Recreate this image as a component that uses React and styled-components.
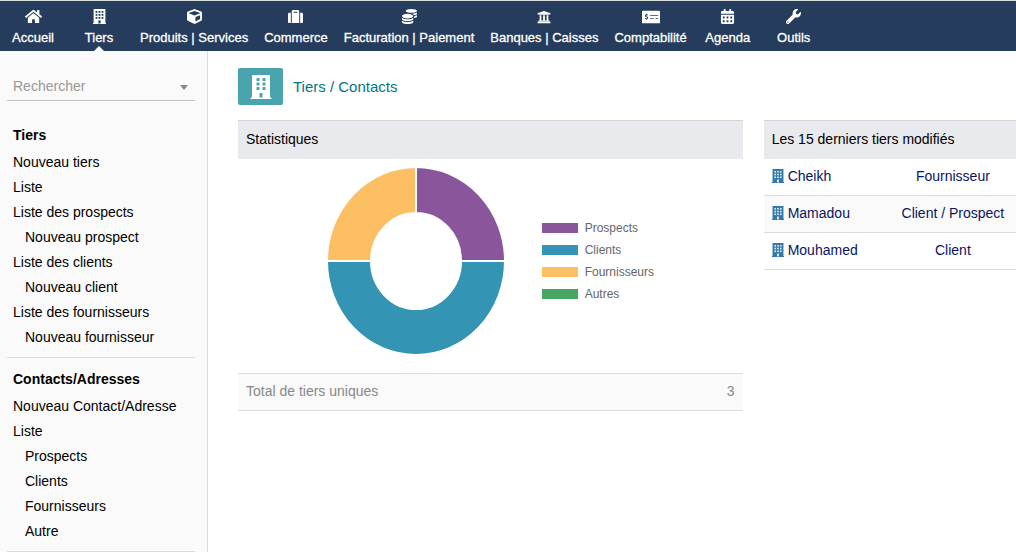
import React from 'react';
import styled, { createGlobalStyle, css } from 'styled-components';
import {
  FaHome,
  FaBuilding,
  FaCube,
  FaSuitcase,
  FaCoins,
  FaUniversity,
  FaMoneyCheckAlt,
  FaCalendarAlt,
  FaWrench,
} from 'react-icons/fa';

const GlobalStyle = createGlobalStyle`
  * {
    box-sizing: border-box;
  }
  body {
    margin: 0;
    background: #fff;
    color: #000;
    font-family: 'Liberation Sans', Arial, sans-serif;
    font-size: 14px;
    line-height: 16px;
  }
  a {
    color: inherit;
    text-decoration: none;
  }
`;

const WINDOW_ROWS = [2, 5, 8];
const WINDOW_COLS = [2.6, 5.6, 8.6];

function TowerIcon({ width = 12, height = 14, fill = 'currentColor', pane }) {
  return (
    <svg width={width} height={height} viewBox='0 0 13 15' aria-hidden='true'>
      <path fill={fill} d='M0.6 0H12.4V14H13V15H0V14H0.6Z' />
      {WINDOW_ROWS.map(y =>
        WINDOW_COLS.map(x => (
          <rect
            key={`${x}-${y}`}
            x={x}
            y={y}
            width='1.8'
            height='1.8'
            fill={pane}
          />
        )),
      )}
      <rect x='5.4' y='11.4' width='2.2' height='3' fill={pane} />
    </svg>
  );
}

const menu = [
  { label: 'Accueil', icon: <FaHome size={17} /> },
  {
    label: 'Tiers',
    icon: <TowerIcon width={13} height={15} pane='#263c5c' />,
    active: true,
  },
  { label: 'Produits | Services', icon: <FaCube size={15} /> },
  { label: 'Commerce', icon: <FaSuitcase size={15} /> },
  { label: 'Facturation | Paiement', icon: <FaCoins size={15} /> },
  { label: 'Banques | Caisses', icon: <FaUniversity size={14} /> },
  { label: 'Comptabilité', icon: <FaMoneyCheckAlt size={18} /> },
  { label: 'Agenda', icon: <FaCalendarAlt size={15} /> },
  { label: 'Outils', icon: <FaWrench size={15} /> },
];

const sections = [
  {
    title: 'Tiers',
    items: [
      { label: 'Nouveau tiers' },
      { label: 'Liste' },
      { label: 'Liste des prospects' },
      { label: 'Nouveau prospect', sub: true },
      { label: 'Liste des clients' },
      { label: 'Nouveau client', sub: true },
      { label: 'Liste des fournisseurs' },
      { label: 'Nouveau fournisseur', sub: true },
    ],
  },
  {
    title: 'Contacts/Adresses',
    items: [
      { label: 'Nouveau Contact/Adresse' },
      { label: 'Liste' },
      { label: 'Prospects', sub: true },
      { label: 'Clients', sub: true },
      { label: 'Fournisseurs', sub: true },
      { label: 'Autre', sub: true },
    ],
  },
];

const legend = [
  { label: 'Prospects', color: '#8a569b' },
  { label: 'Clients', color: '#3494b4' },
  { label: 'Fournisseurs', color: '#fdbf64' },
  { label: 'Autres', color: '#48a662' },
];

const lastModified = [
  { name: 'Cheikh', type: 'Fournisseur' },
  { name: 'Mamadou', type: 'Client / Prospect' },
  { name: 'Mouhamed', type: 'Client' },
];

function Donut() {
  return (
    <DonutSvg viewBox='0 0 178 188' role='img' aria-label='Statistiques'>
      <g stroke='#fff' strokeWidth='2'>
        <path
          fill='#8a569b'
          d='M89 0A89 94 0 0 1 178 94H134A45 48 0 0 0 89 46Z'
        />
        <path
          fill='#3494b4'
          d='M178 94A89 94 0 0 1 0 94H44A45 48 0 0 0 134 94Z'
        />
        <path
          fill='#fdbf64'
          d='M0 94A89 94 0 0 1 89 0V46A45 48 0 0 0 44 94Z'
        />
      </g>
    </DonutSvg>
  );
}

function App() {
  return (
    <>
      <GlobalStyle />
      <TopBar>
        {menu.map(({ label, icon, active }) => (
          <MenuItem key={label} href='#' $active={active}>
            <MenuIcon>{icon}</MenuIcon>
            {label}
          </MenuItem>
        ))}
      </TopBar>
      <Layout>
        <Sidebar>
          <Search aria-label='Rechercher' defaultValue=''>
            <option value=''>Rechercher</option>
          </Search>
          {sections.map(({ title, items }) => (
            <Section key={title}>
              <SectionTitle href='#'>{title}</SectionTitle>
              {items.map(({ label, sub }) => (
                <SideLink key={label} href='#' $sub={sub}>
                  {label}
                </SideLink>
              ))}
            </Section>
          ))}
        </Sidebar>
        <Main>
          <PageHeader>
            <PageIcon>
              <FaBuilding size={24} />
            </PageIcon>
            <PageTitle>Tiers / Contacts</PageTitle>
          </PageHeader>
          <Columns>
            <section>
              <PanelTitle>Statistiques</PanelTitle>
              <Chart>
                <Donut />
                <Legend>
                  {legend.map(({ label, color }) => (
                    <LegendItem key={label} $color={color}>
                      {label}
                    </LegendItem>
                  ))}
                </Legend>
              </Chart>
              <Total>
                <span>Total de tiers uniques</span>
                <span>3</span>
              </Total>
            </section>
            <Table>
              <thead>
                <tr>
                  <HeadCell colSpan={2}>Les 15 derniers tiers modifiés</HeadCell>
                </tr>
              </thead>
              <tbody>
                {lastModified.map(({ name, type }) => (
                  <Row key={name}>
                    <Cell>
                      <NameLink href='#'>
                        <TowerIcon fill='#3278a8' pane='#dcebf4' />
                        {name}
                      </NameLink>
                    </Cell>
                    <Cell $center>{type}</Cell>
                  </Row>
                ))}
              </tbody>
            </Table>
          </Columns>
        </Main>
      </Layout>
    </>
  );
}

const TopBar = styled.nav`
  display: flex;
  height: 51px;
  border-top: 1px solid #dadfdd;
  background: #263c5c;
`;

const MenuItem = styled.a`
  position: relative;
  display: flex;
  flex-direction: column;
  align-items: center;
  min-width: 66px;
  padding: 6px 8px 0;
  color: #fff;
  font-size: 13px;
  white-space: nowrap;
  -webkit-text-stroke: 0.3px #fff;
  ${props =>
    props.$active &&
    css`
      &::after {
        content: '';
        position: absolute;
        bottom: 0;
        border: 5px solid transparent;
        border-top: 0;
        border-bottom-color: #fafafa;
      }
    `}
`;

const MenuIcon = styled.span`
  display: flex;
  align-items: center;
  height: 19px;
  margin-bottom: 4px;
`;

const Layout = styled.div`
  display: flex;
  min-height: calc(100vh - 51px);
`;

const Sidebar = styled.aside`
  flex: none;
  width: 208px;
  padding: 21px 12px 0 7px;
  border-right: 1px solid #dcdcdc;
  background: #fafafa;
`;

const Search = styled.select`
  display: block;
  width: 100%;
  height: 29px;
  margin-bottom: 13px;
  padding: 0 6px;
  border: 0;
  border-bottom: 1px solid #c4c4c4;
  border-radius: 0;
  appearance: none;
  background: url("data:image/svg+xml,%3Csvg xmlns='http://www.w3.org/2000/svg' width='8' height='5'%3E%3Cpath fill='%23888' d='M0 0h8L4 5z'/%3E%3C/svg%3E")
    no-repeat right 7px top 13px;
  color: #999;
  font: inherit;
`;

const Section = styled.div`
  padding: 9px 6px 7px;
  border-bottom: 1px solid #dcdcdc;
`;

const SectionTitle = styled.a`
  display: block;
  margin-bottom: 2px;
  font-weight: bold;
  line-height: 25px;
`;

const SideLink = styled.a`
  display: block;
  padding-left: ${props => (props.$sub ? '12px' : '0')};
  line-height: 25px;
  white-space: nowrap;
`;

const Main = styled.main`
  flex: 1;
  min-width: 0;
  padding: 17px 0 0 30px;
`;

const PageHeader = styled.header`
  display: flex;
  align-items: center;
  gap: 10px;
  margin-bottom: 15px;
`;

const PageIcon = styled.span`
  display: flex;
  align-items: center;
  justify-content: center;
  width: 45px;
  height: 37px;
  border-radius: 2px;
  background: #4aa4ad;
  color: #fff;
`;

const PageTitle = styled.h1`
  margin: 0;
  color: #007782;
  font-size: 15px;
  font-weight: normal;
`;

const Columns = styled.div`
  display: grid;
  grid-template-columns: 2fr 1fr;
  align-items: start;
  gap: 21px;
`;

const panelHead = css`
  height: 39px;
  padding: 0 8px 2px;
  border-top: 1px solid #d4d4d4;
  background: #e9eaed;
  font-size: 14px;
  font-weight: normal;
  line-height: 36px;
  text-align: left;
  white-space: nowrap;
`;

const PanelTitle = styled.h2`
  ${panelHead}
  margin: 0;
`;

const Chart = styled.div`
  display: flex;
  align-items: center;
  justify-content: center;
  gap: 37px;
  padding: 8px 0 18px;
`;

const DonutSvg = styled.svg`
  width: 178px;
  height: 188px;
`;

const Legend = styled.ul`
  margin: 0;
  padding: 0;
  list-style: none;
`;

const LegendItem = styled.li`
  display: flex;
  align-items: center;
  gap: 7px;
  height: 22px;
  color: #666;
  font-size: 12px;
  &::before {
    content: '';
    width: 36px;
    height: 10px;
    background: ${props => props.$color};
  }
`;

const Total = styled.div`
  display: flex;
  align-items: center;
  justify-content: space-between;
  height: 38px;
  padding: 0 8px 2px;
  border: solid #dcdcdc;
  border-width: 1px 0;
  background: #fafafa;
  color: #888;
`;

const Table = styled.table`
  width: 100%;
  border-spacing: 0;
  table-layout: fixed;
`;

const HeadCell = styled.th`
  ${panelHead}
`;

const Row = styled.tr`
  &:nth-child(even) {
    background: #fafafa;
  }
`;

const Cell = styled.td`
  height: 37px;
  padding: 0 8px 2px;
  border-bottom: 1px solid #dcdcdc;
  color: #0a1464;
  text-align: ${props => (props.$center ? 'center' : 'left')};
  white-space: nowrap;
`;

const NameLink = styled.a`
  display: flex;
  align-items: center;
  gap: 4px;
`;

export default App;
